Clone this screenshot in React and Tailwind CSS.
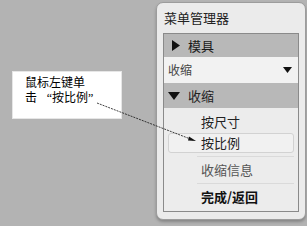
export default function App() {
  const sans = { fontFamily: '"Noto Sans CJK SC", "Noto Sans", sans-serif' };
  return (
    <div className="relative w-[307px] h-[226px] bg-[#b3b3b3] overflow-hidden flex items-start" style={sans}>
      <div
        className="ml-[12px] mt-[71px] w-[110px] h-[48px] bg-white border border-[#e6e6e6] pl-[12px] pt-[4px] text-[12px] leading-[15px] text-black"
        style={{ fontFamily: '"Liberation Serif", "Noto Sans CJK SC", serif' }}
      >
        <div>鼠标左键单</div>
        <div className="flex">
          <span>击</span>
          <span className="inline-block w-[15px] text-right">“</span>
          <span>按比例</span>
          <span className="inline-block w-[12px] text-left">”</span>
        </div>
      </div>

      <div className="ml-[34px] mt-[2px] w-[150px] h-[218px] rounded-[7px] border border-[#9c9c9c] bg-[#ebebeb] shadow-[0_2px_3px_rgba(0,0,0,0.25)] flex flex-col px-[6px]">
        <div className="h-[30px] flex items-center pl-[1px] text-[13px] text-[#222]">菜单管理器</div>
        <div className="flex-1 mb-[7px] border border-[#8a8a8a] bg-[#ececec] flex flex-col">
          <div className="h-[23px] bg-[#b8b8b8] flex items-center pl-[8px] text-[13px] text-[#1a1a1a]">
            <svg width="8" height="11" viewBox="0 0 8 11" className="mr-[8px]">
              <path d="M0 0 L8 5.5 L0 11 Z" fill="#111" />
            </svg>
            模具
          </div>
          <div className="h-[26px] bg-[#f2f2f2] flex items-center justify-between pl-[4px] pr-[6px] text-[12px] text-[#444]">
            <span>收缩</span>
            <svg width="9" height="6" viewBox="0 0 9 6">
              <path d="M0 0 L9 0 L4.5 6 Z" fill="#111" />
            </svg>
          </div>
          <div className="h-[25px] bg-[#b8b8b8] flex items-center pl-[4px] text-[13px] text-[#222]">
            <svg width="12" height="8" viewBox="0 0 12 8" className="mr-[8px]">
              <path d="M0 0 L12 0 L6 8 Z" fill="#111" />
            </svg>
            收缩
          </div>
          <div className="flex-1 flex flex-col pt-[4px] text-[13px]">
            <div className="h-[20px] flex items-center pl-[37px] text-[#222]">按尺寸</div>
            <div className="mt-[1px] mx-[4px] h-[20px] rounded-[3px] border border-[#d2d2d2] bg-[#f1f1f1] flex items-center pl-[32px] text-[#222]">按比例</div>
            <div className="mt-[3px] ml-[33px] mr-[4px] h-[1px] bg-[#dadada]" />
            <div className="mt-[3px] h-[20px] flex items-center pl-[37px] text-[#555]">收缩信息</div>
            <div className="mt-[3px] ml-[33px] mr-[4px] h-[1px] bg-[#dadada]" />
            <div className="mt-[3px] h-[20px] flex items-center pl-[37px] text-[#111] font-bold">完成/返回</div>
          </div>
        </div>
      </div>

      <svg className="absolute inset-0 pointer-events-none" width="307" height="226">
        <line x1="97" y1="103" x2="193" y2="140" stroke="#111" strokeWidth="0.8" strokeDasharray="2 1" />
        <path d="M196 141 L189 136.5 L188 140.5 Z" fill="#111" />
      </svg>
    </div>
  );
}
